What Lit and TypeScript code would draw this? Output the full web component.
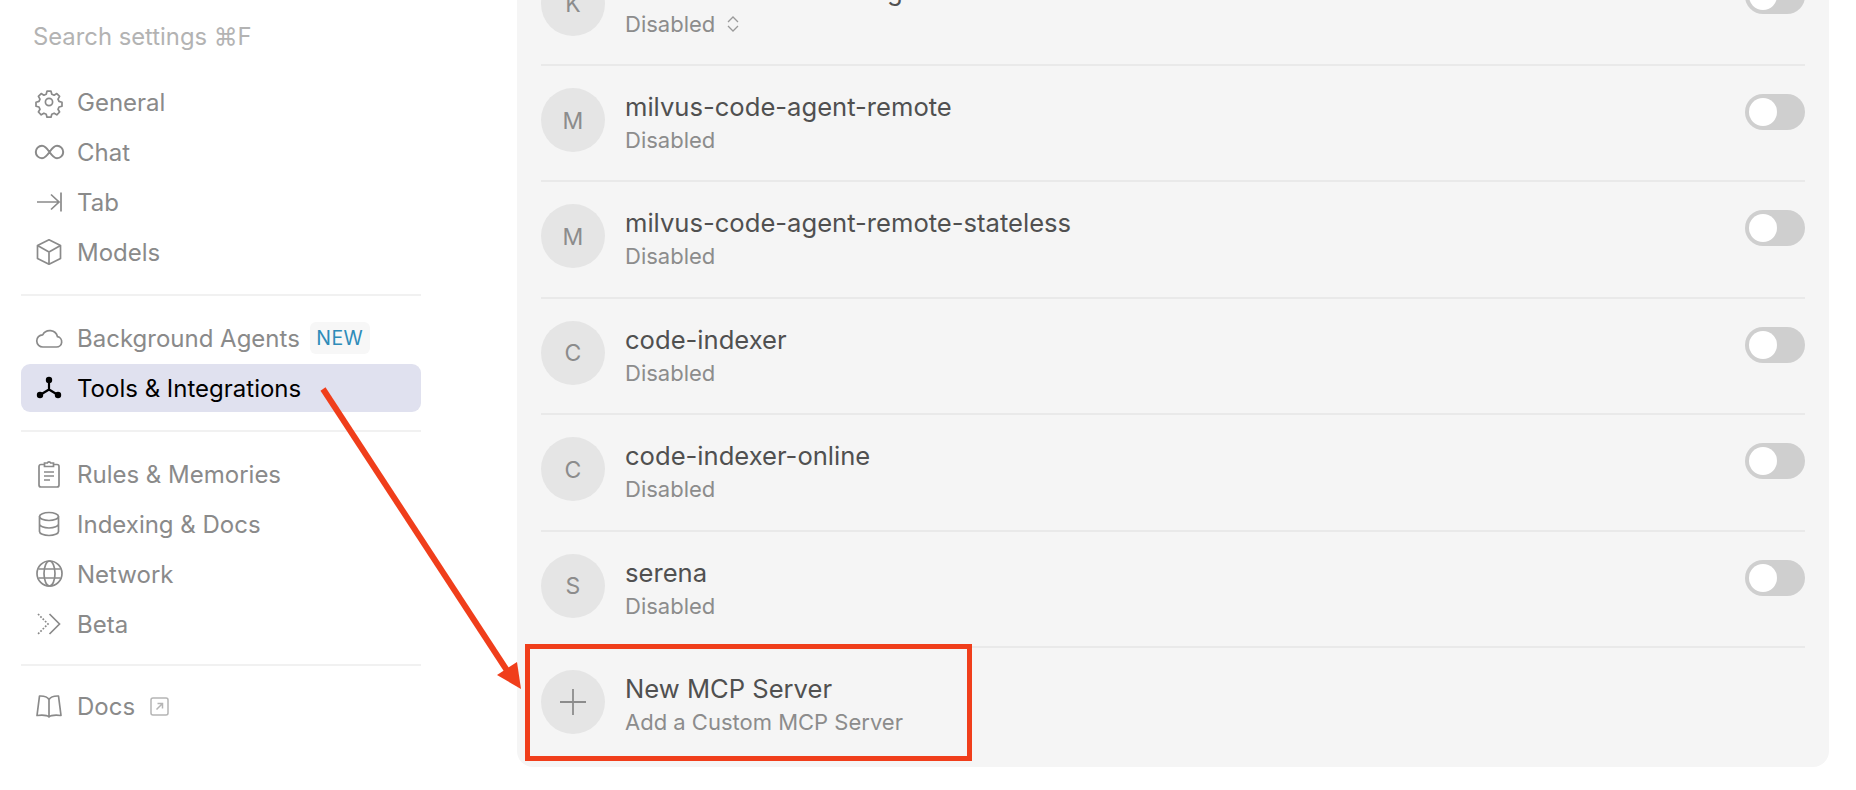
import { LitElement, html, css, svg } from "lit";
import { customElement, property } from "lit/decorators.js";

const icons: Record<string, unknown> = {
  gear: svg`<path d="M11 2.200h4l.8 3 2.300 1 2.700-1.600 2.800 2.800-1.600 2.700 1 2.300 3 .8v4l-3 .8-1 2.300 1.600 2.700-2.800 2.800-2.700-1.600-2.300 1-.8 3h-4l-.8-3-2.300-1-2.700 1.600-2.800-2.800 1.600-2.700-1-2.300-3-.8v-4l3-.8 1-2.300L2.400 7.400l2.800-2.800 2.700 1.600 2.300-1z" stroke-linejoin="round"/><circle cx="13" cy="13" r="3.600"/>`,
  chat: svg`<path d="M13.500 13c-2.500-3.700-4.500-6.200-7.500-6.200a6.200 6.200 0 0 0 0 12.400c3 0 5-2.500 7.500-6.200s4.500-6.200 7.500-6.200a6.200 6.200 0 0 1 0 12.400c-3 0-5-2.500-7.500-6.200z" stroke-width="2"/>`,
  tab: svg`<path d="M1 13h22M15 5.500l8 7.500-8 7.500M25 3.500v19"/>`,
  cube: svg`<path d="M13 .8l11.500 5.800v12.800L13 25.200 1.500 19.400V6.600zM1.500 6.600L13 13l11.500-6.400M13 13v12.200" stroke-linejoin="round"/>`,
  cloud: svg`<path d="M7 22h13.500a5.200 5.200 0 0 0 1-10.300 8 8 0 0 0-14.800-1.900A6.100 6.100 0 0 0 7 22z" stroke-linejoin="round"/>`,
  tools: svg`<path d="M13 5v9.500M13 14.500L4 20M13 14.500L22 20" stroke-width="2.200"/><circle cx="13" cy="5" r="3.200" fill="currentColor" stroke="none"/><circle cx="4" cy="20" r="3.200" fill="currentColor" stroke="none"/><circle cx="22" cy="20" r="3.200" fill="currentColor" stroke="none"/>`,
  rules: svg`<path d="M8.500 3.500H5a2 2 0 0 0-2 2v18.500a2 2 0 0 0 2 2h16a2 2 0 0 0 2-2V5.500a2 2 0 0 0-2-2h-3.500M8.500 2h2.800a1.800 1.800 0 0 1 3.400 0h2.800v3.500h-9zM8 11h10M8 15h10M8 19h6"/>`,
  database: svg`<ellipse cx="13" cy="5.500" rx="9.500" ry="4"/><path d="M3.500 5.500v15c0 2.200 4.300 4 9.500 4s9.500-1.800 9.500-4v-15M3.500 13c0 2.200 4.300 4 9.500 4s9.500-1.800 9.500-4"/>`,
  globe: svg`<circle cx="13.500" cy="12.500" r="12.500"/><ellipse cx="13.500" cy="12.500" rx="5.500" ry="12.500"/><path d="M2.500 8h22M2.500 17h22"/>`,
  beta: svg`<path d="M2 3l10 10-10 10" stroke-dasharray="1.800 1.500"/><path d="M13.500 3l10 10-10 10"/>`,
  book: svg`<path d="M13 6.500C11.500 4 8 2.800 3.500 3L1 22.500C6 22 10.500 21.500 13 24C15.500 21.500 20 22 25 22.500L22.500 3C18 2.800 14.500 4 13 6.500V23" stroke-linejoin="round"/>`,
};

@customElement("nav-icon")
class NavIcon extends LitElement {
  @property() name = "gear";

  static styles = css`
    :host {
      display: block;
      flex: none;
      width: 26px;
      height: 26px;
    }
    svg {
      display: block;
      width: 26px;
      height: 26px;
      fill: none;
      stroke: currentColor;
      stroke-width: 1.7;
      overflow: visible;
    }
  `;

  render() {
    return html`<svg viewBox="0 0 26 26">${icons[this.name]}</svg>`;
  }
}

type Server = { letter: string; name: string; chevron?: boolean };

const servers: Server[] = [
  { letter: "K", name: "kubernetes-monitoring", chevron: true },
  { letter: "M", name: "milvus-code-agent-remote" },
  { letter: "M", name: "milvus-code-agent-remote-stateless" },
  { letter: "C", name: "code-indexer" },
  { letter: "C", name: "code-indexer-online" },
  { letter: "S", name: "serena" },
];

@customElement("app-root")
export class AppRoot extends LitElement {
  static styles = css`
    :host {
      display: block;
      position: relative;
      width: 1856px;
      height: 790px;
      overflow: hidden;
      background: #fff;
      font-family: Inter, "Liberation Sans", sans-serif;
    }

    .page {
      display: flex;
      height: 790px;
    }

    .sidebar {
      box-sizing: border-box;
      width: 517px;
      flex: none;
      padding: 22px 96px 0 21px;
    }

    .search {
      height: 30px;
      line-height: 30px;
      padding-left: 12px;
      font-size: 23.800px;
      color: #b3b3b3;
      margin-bottom: 26px;
    }

    .item {
      display: flex;
      align-items: center;
      gap: 15px;
      height: 48px;
      padding-left: 15px;
      margin-bottom: 2px;
      border-radius: 9px;
      font-size: 24px;
      color: #8a8a8a;
    }

    .item.active {
      background: #e0e1ef;
      color: #000;
    }

    .badge {
      display: flex;
      align-items: center;
      height: 32px;
      padding: 0 6.500px;
      margin-left: -5px;
      border-radius: 6px;
      background: #f7f7f7;
      font-size: 19.500px;
      letter-spacing: 0.4px;
      color: #2f8cb9;
    }

    .ext {
      display: block;
      width: 19px;
      height: 19px;
      fill: none;
      stroke: #b5b5b5;
      stroke-width: 1.5;
    }

    .rule {
      height: 2px;
      background: #f1f1f1;
    }
    .rule.a,
    .rule.b {
      margin: 18px 0 18px;
    }
    .rule.c {
      margin: 16px 0 16px;
    }

    .panel {
      box-sizing: border-box;
      width: 1312px;
      height: 767px;
      flex: none;
      padding: 0 24px;
      overflow: hidden;
      background: #f5f5f5;
      border-radius: 0 0 16px 16px;
    }

    .list {
      margin-top: -50.400px;
    }

    .row {
      box-sizing: border-box;
      display: flex;
      align-items: flex-start;
      height: 116.400px;
      border-bottom: 2px solid #e9e9e9;
    }

    .row.last {
      border-bottom: none;
    }

    .avatar {
      display: flex;
      align-items: center;
      justify-content: center;
      width: 64px;
      height: 64px;
      flex: none;
      margin-top: 22px;
      padding-top: 1px;
      box-sizing: border-box;
      border-radius: 50%;
      background: #e5e5e5;
      color: #8c8c8c;
      font-size: 23px;
    }

    .plus {
      width: 26px;
      height: 26px;
      margin-top: -1px;
      fill: none;
      stroke: #8c8c8c;
      stroke-width: 1.800;
    }

    .text {
      flex: 1;
      margin-left: 20px;
      padding-top: 26px;
    }

    .title {
      font-size: 25.600px;
      line-height: 30px;
      color: #505050;
    }

    .sub {
      display: flex;
      align-items: center;
      gap: 11px;
      margin-top: 4px;
      font-size: 22px;
      line-height: 28px;
      color: #8c8c8c;
    }

    .chevron {
      display: block;
      width: 14px;
      height: 20px;
      fill: none;
      stroke: #9a9a9a;
      stroke-width: 1.300;
    }

    .toggle {
      box-sizing: border-box;
      width: 60px;
      height: 36px;
      flex: none;
      margin-top: 28px;
      padding: 4px;
      border-radius: 18px;
      background: #cfcfcf;
    }

    .toggle span {
      display: block;
      width: 28px;
      height: 28px;
      border-radius: 50%;
      background: #fff;
    }

    .mark {
      position: absolute;
      left: 0;
      top: 0;
      width: 1856px;
      height: 790px;
      pointer-events: none;
    }
  `;

  private navItem(icon: string, label: string, extra: unknown = "", active = false) {
    return html`
      <div class="item ${active ? "active" : ""}">
        <nav-icon name=${icon}></nav-icon>
        <span>${label}</span>
        ${extra}
      </div>
    `;
  }

  render() {
    return html`
      <div class="page">
        <aside class="sidebar">
          <div class="search">Search settings ⌘F</div>
          ${this.navItem("gear", "General")}
          ${this.navItem("chat", "Chat")}
          ${this.navItem("tab", "Tab")}
          ${this.navItem("cube", "Models")}
          <div class="rule a"></div>
          ${this.navItem("cloud", "Background Agents", html`<span class="badge">NEW</span>`)}
          ${this.navItem("tools", "Tools & Integrations", "", true)}
          <div class="rule b"></div>
          ${this.navItem("rules", "Rules & Memories")}
          ${this.navItem("database", "Indexing & Docs")}
          ${this.navItem("globe", "Network")}
          ${this.navItem("beta", "Beta")}
          <div class="rule c"></div>
          ${this.navItem(
            "book",
            "Docs",
            html`<svg class="ext" viewBox="0 0 19 19">
              <rect x="1" y="1" width="17" height="17" rx="2"></rect>
              <path d="M6.500 12.500l6-6M7.500 6.500h5v5"></path>
            </svg>`,
          )}
        </aside>
        <main class="panel">
          <div class="list">
            ${servers.map(
              (s) => html`
                <div class="row">
                  <div class="avatar">${s.letter}</div>
                  <div class="text">
                    <div class="title">${s.name}</div>
                    <div class="sub">
                      Disabled
                      ${s.chevron
                        ? html`<svg class="chevron" viewBox="0 0 14 20">
                            <path d="M2 8l5-5 5 5M2 12l5 5 5-5"></path>
                          </svg>`
                        : ""}
                    </div>
                  </div>
                  <div class="toggle"><span></span></div>
                </div>
              `,
            )}
            <div class="row last">
              <div class="avatar">
                <svg class="plus" viewBox="0 0 26 26"><path d="M13 0v26M0 13h26"></path></svg>
              </div>
              <div class="text">
                <div class="title">New MCP Server</div>
                <div class="sub">Add a Custom MCP Server</div>
              </div>
            </div>
          </div>
        </main>
      </div>
      <svg class="mark" viewBox="0 0 1856 790">
        <path d="M323 389L510 675" stroke="#f03e1b" stroke-width="6" fill="none"></path>
        <path d="M521 689L497 675L517 662Z" fill="#f03e1b"></path>
        <rect x="527.500" y="646.500" width="442" height="112" fill="none" stroke="#f03e1b" stroke-width="5"></rect>
      </svg>
    `;
  }
}
